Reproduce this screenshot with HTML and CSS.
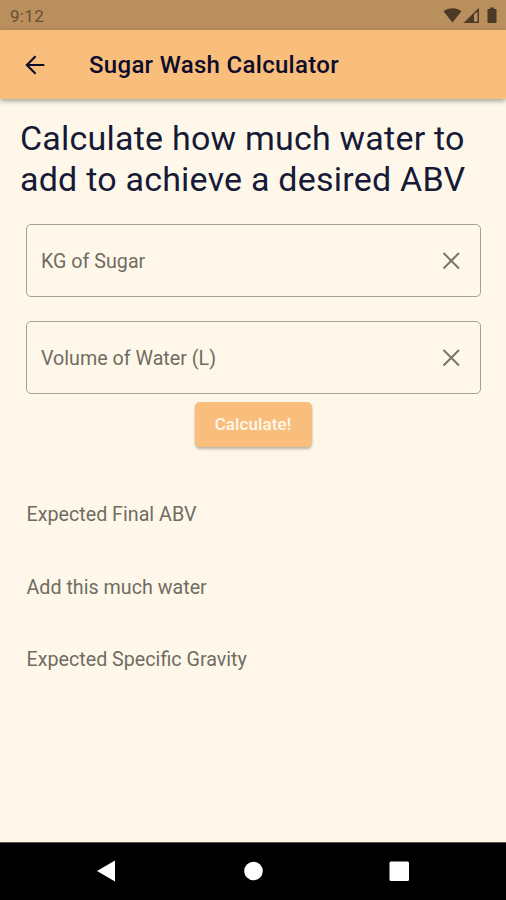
FILE: index.html
```html
<!DOCTYPE html>
<html lang="en">
<head>
  <meta charset="UTF-8" />
  <meta name="viewport" content="width=device-width, initial-scale=1.0" />
  <title>Sugar Wash Calculator</title>
  <link rel="stylesheet" href="styles.css">
</head>
<body>

  <div class="status-bar">
    <span class="clock">9:12</span>
    <svg class="status-icons" width="56" height="18" viewBox="0 0 56 18">
      <path d="M0.500 4.300C5.500 0.300 13.500 0.300 18.500 4.300L9.500 15.500Z" />
      <path d="M20.500 16L36 0.800V16Z M31 7.500V14.500H34.500V4.500Z" fill-rule="evenodd" />
      <path d="M47 0.500h4v1.500h2.500v14h-9v-14h2.500z" />
    </svg>
  </div>

  <header class="app-bar">
    <button class="back" aria-label="Back">
      <svg width="28" height="28" viewBox="0 0 24 24">
        <path d="M20 12H5M12.500 4.500L5 12l7.500 7.500" />
      </svg>
    </button>
    <h1>Sugar Wash Calculator</h1>
  </header>

  <main class="content">
    <h2>Calculate how much water to<br>add to achieve a desired ABV</h2>

    <form class="calculator" onsubmit="return false">
      <div class="field">
        <span class="label">KG of Sugar</span>
        <button type="button" class="clear" aria-label="Clear">
          <svg width="18" height="18" viewBox="0 0 18 18"><path d="M1.500 1l15.500 15.500M17 1l-15.500 15.500" /></svg>
        </button>
      </div>
      <div class="field">
        <span class="label">Volume of Water (L)</span>
        <button type="button" class="clear" aria-label="Clear">
          <svg width="18" height="18" viewBox="0 0 18 18"><path d="M1.500 1l15.500 15.500M17 1l-15.500 15.500" /></svg>
        </button>
      </div>
      <button type="submit" class="calculate">Calculate!</button>
    </form>

    <div class="results">
      <p>Expected Final ABV</p>
      <p>Add this much water</p>
      <p>Expected Specific Gravity</p>
    </div>
  </main>

  <nav class="nav-bar">
    <svg width="20" height="20" viewBox="0 0 20 20"><path d="M1 10L19 -0.500v21z" /></svg>
    <svg width="20" height="20" viewBox="0 0 20 20"><circle cx="10.500" cy="10" r="9.300" /></svg>
    <svg width="20" height="20" viewBox="0 0 20 20"><rect x="0.500" y="0.500" width="19.500" height="19.500" rx="1.500" /></svg>
  </nav>

</body>
</html>
```

FILE: styles.css
```css
* {
  box-sizing: border-box;
}

body {
  margin: 0;
  height: 100vh;
  display: flex;
  flex-direction: column;
  overflow: hidden;
  font-family: Roboto, sans-serif;
  background-color: #fff8ea;
}

button {
  border: none;
  background: none;
  padding: 0;
  font-family: inherit;
  cursor: pointer;
}

svg {
  display: block;
  overflow: visible;
}

.status-bar {
  height: 30px;
  padding: 1px 7px 0 10px;
  display: flex;
  align-items: center;
  justify-content: space-between;
  background-color: #ba8f5e;
}

.clock {
  font-size: 17px;
  letter-spacing: 0.3px;
  color: #694f33;
}

.status-icons {
  fill: #4b3a25;
}

.app-bar {
  height: 69px;
  padding-left: 21px;
  display: flex;
  align-items: center;
  background-color: #f9be7c;
  box-shadow: 0 2px 5px rgba(60, 80, 70, 0.5);
}

.back svg {
  fill: none;
  stroke: #0d0c2b;
  stroke-width: 1.8;
}

.app-bar h1 {
  margin: 0 0 0 40px;
  font-size: 24px;
  font-weight: 500;
  letter-spacing: 0.3px;
  color: #0d0c2b;
}

.content {
  flex: 1;
  padding: 19px 26px 0;
}

.content h2 {
  margin: 0 0 24px -6px;
  font-size: 34px;
  font-weight: 400;
  line-height: 41px;
  letter-spacing: 0.22px;
  white-space: nowrap;
  color: #161a36;
}

.calculator {
  display: flex;
  flex-direction: column;
  align-items: center;
}

.field {
  width: 455px;
  height: 73px;
  margin-bottom: 24px;
  padding: 0 20px 0 14.5px;
  display: flex;
  align-items: center;
  justify-content: space-between;
  border: 1px solid #a5a194;
  border-radius: 5px;
}

.field + .field {
  margin-bottom: 8px;
}

.label {
  padding-top: 2px;
  font-size: 19.7px;
  color: #706c63;
}

.clear svg {
  fill: none;
  stroke: #77736a;
  stroke-width: 2;
}

.calculate {
  width: 117px;
  height: 45px;
  padding-bottom: 2px;
  border-radius: 5px;
  background-color: #f9be7c;
  box-shadow: 0 2px 3px rgba(80, 70, 50, 0.4);
  font-size: 17px;
  font-weight: 500;
  letter-spacing: 0.1px;
  color: #fff8ea;
}

.results {
  margin-top: 56px;
}

.results p {
  margin: 0 0 48.5px 0.5px;
  font-size: 19.7px;
  line-height: 24px;
  color: #706c63;
}

.nav-bar {
  height: 58px;
  padding: 18px 97px 0 96px;
  display: flex;
  align-items: flex-start;
  justify-content: space-between;
  border-top: 1px solid #55574a;
  background-color: #000;
  fill: #fff;
}
```
